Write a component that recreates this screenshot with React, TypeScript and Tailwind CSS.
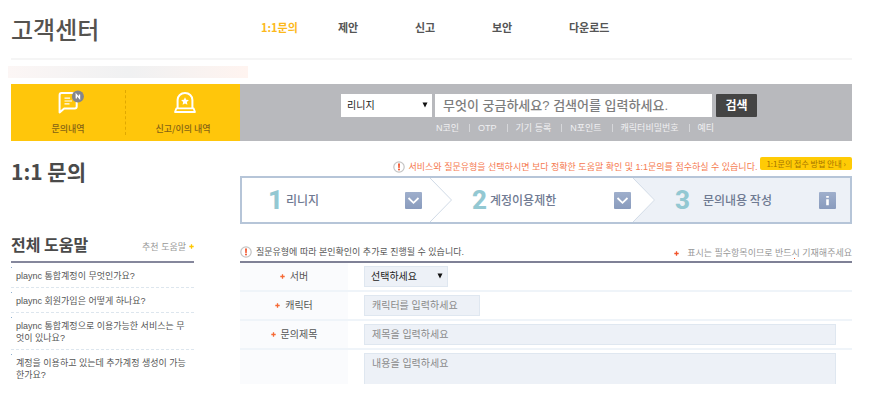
import React from "react";

const bodyFont = "font-['Liberation_Sans','Noto_Sans_CJK_KR',sans-serif]";
const titleFont = "font-['Noto_Sans_CJK_KR',sans-serif]";

const navItems = ["1:1문의", "제안", "신고", "보안", "다운로드"];
const keywords = ["N코인", "OTP", "기기 등록", "N포인트", "캐릭터비밀번호", "예티"];
const helpItems: string[][] = [
  ["plaync 통합계정이 무엇인가요?"],
  ["plaync 회원가입은 어떻게 하나요?"],
  ["plaync 통합계정으로 이용가능한 서비스는 무", "엇이 있나요?"],
  ["계정을 이용하고 있는데 추가계정 생성이 가능", "한가요?"],
];

function Alert() {
  return (
    <svg viewBox="0 0 12 12" className="size-3 shrink-0" aria-hidden="true">
      <circle cx="6" cy="6" r="5.2" fill="#fff" stroke="#c4c4c4" strokeWidth="1.2" />
      <path d="M5 2.6h2L6.7 7H5.3z" fill="#f2542c" />
      <circle cx="6" cy="8.6" r="1" fill="#f2542c" />
    </svg>
  );
}

function Arrow({ className }: { className: string }) {
  return (
    <svg viewBox="0 0 6 6" className={`pointer-events-none absolute size-[6px] ${className}`} aria-hidden="true">
      <path d="M0.5 0.5h5L3 5.5z" fill="#111" />
    </svg>
  );
}

function Plus({ className }: { className: string }) {
  return (
    <svg viewBox="0 0 5 5" className={`size-[5px] shrink-0 ${className}`} aria-hidden="true">
      <path d="M2.5 0.3v4.4M0.3 2.5h4.4" stroke="currentColor" strokeWidth="1.3" />
    </svg>
  );
}

function InquiryIcon() {
  return (
    <svg viewBox="0 0 28 24" className="ml-1 h-6 w-7" fill="none" aria-hidden="true">
      <path
        d="M5.5 3h13.2c1.3 0 2 .8 2 2v11.4c0 1.3-.8 2-2 2H8.2L3.6 22.4V5.2c0-1.3.8-2.2 1.9-2.2z"
        stroke="#fff"
        strokeWidth="2"
        strokeLinejoin="round"
      />
      <path d="M8.5 8.2h5.5M8.5 11h7.5M8.5 13.8h5" stroke="#fff" strokeWidth="1.2" />
      <circle cx="21.9" cy="6.4" r="6" fill="#84868d" />
      <path d="M20.3 8.6V4.6l3.2 3.6V4.6" stroke="#fff" strokeWidth="1.4" />
    </svg>
  );
}

function SirenIcon() {
  return (
    <svg viewBox="0 0 24 24" className="ml-1 size-6" fill="none" aria-hidden="true">
      <path
        d="M4.6 18V10C4.6 5.9 7.8 3 12 3s7.4 2.9 7.4 7v8"
        stroke="#fff"
        strokeWidth="2"
      />
      <path d="M3.4 18.4h17.2l1.4 3.6H2z" stroke="#fff" strokeWidth="1.8" strokeLinejoin="round" />
      <path d="M12 7.2l1.2 2.5 2.7.4-2 1.9.5 2.7-2.4-1.3-2.4 1.3.5-2.7-2-1.9 2.7-.4z" fill="#fff" />
    </svg>
  );
}

function Divider({ fill }: { fill: string }) {
  return (
    <svg viewBox="0 0 22 44" preserveAspectRatio="none" className="h-full w-[22px] shrink-0" aria-hidden="true">
      <path d="M0 0h22v44H0L22 22z" fill={fill} />
      <path d="M0 0L21.5 22L0 44" fill="none" stroke="#d0dae6" />
    </svg>
  );
}

function StepButton({ kind, label }: { kind: "open" | "info"; label: string }) {
  return (
    <button type="button" aria-label={label} className="size-[17px] shrink-0 rounded-[1px] bg-linear-to-b from-[#9fafcc] to-[#899bbd]">
      <svg viewBox="0 0 17 17" className="size-full" fill="none" aria-hidden="true">
        {kind === "open" ? (
          <path d="M3.5 6l5 4.8 5-4.8" stroke="#fff" strokeWidth="1.8" />
        ) : (
          <path d="M7.2 4h2.6v1.8H7.2zM7.2 7.2h2.6v6H7.2z" fill="#fff" />
        )}
      </svg>
    </button>
  );
}

function StepText({ no, children }: { no: string; children: React.ReactNode }) {
  return (
    <>
      <span className="w-[14px] shrink-0 font-['Roboto',sans-serif] text-[26px] leading-none font-extrabold text-[#93c8d2]">{no}</span>
      <span className={`${no === "3" ? "ml-[14px]" : "ml-1"} flex-1 text-xs font-medium whitespace-nowrap text-[#6f7a92]`}>{children}</span>
    </>
  );
}

function Row({ id, label, children }: { id?: string; label?: string; children: React.ReactNode }) {
  return (
    <div className={`flex ${label ? "border-b-2 border-[#eff4f9]" : "h-[34px] overflow-hidden"}`}>
      <div className="flex w-[108px] shrink-0 items-center justify-center gap-[5px] bg-[#fafbfd] pb-px text-[10px] text-[#555]">
        {label && <Plus className="text-[#f56a35]" />}
        {label && <label htmlFor={id}>{label}</label>}
      </div>
      <div className="min-w-0 flex-1 px-4 pt-[3px] pb-[3px]">{children}</div>
    </div>
  );
}

const field =
  "block h-[21px] rounded-none border border-[#dfe7f0] bg-[#edf1f7] px-[7px] text-[10px] text-[#555] placeholder:text-[#8a8a8a] outline-none";

export default function App() {
  return (
    <div className={`bg-white pr-[19px] pl-[11px] ${bodyFont}`}>
      <header className={`flex h-[60px] items-center border-b-2 border-[#f5f5f5] ${titleFont}`}>
        <h1 className="w-[229px] text-2xl leading-none font-medium text-[#55534f]">고객센터</h1>
        <nav className="flex pb-1 pl-[21px]">
          {navItems.map((item, i) => (
            <a key={item} href="#" className={`w-[77px] text-[11px] leading-4 font-bold whitespace-nowrap ${i === 0 ? "text-[#fcb91c]" : "text-[#555]"}`}>
              {item}
            </a>
          ))}
        </nav>
      </header>

      <div className="-ml-[3px] mt-[6px] h-3 w-60 bg-linear-to-r from-[#fcf6f5] via-[#f0f1f2] to-[#fff4f0]" />

      <section className="mt-[6px] flex h-[57px] bg-[#b8b9bd]">
        <div className={`flex w-[229px] shrink-0 bg-[#ffc60b] text-[9px] leading-3 font-medium text-[#856315] ${titleFont}`}>
          <a href="#" className="my-1.5 flex flex-1 flex-col items-center justify-between border-r border-dashed border-[#e0a800]">
            <InquiryIcon />
            문의내역
          </a>
          <a href="#" className="my-1.5 flex flex-1 flex-col items-center justify-between">
            <SirenIcon />
            신고/이의 내역
          </a>
        </div>
        <form className="min-w-0 flex-1 pt-[10px] pl-[101px]" onSubmit={(e) => e.preventDefault()}>
          <div className="flex h-[23px]">
            <div className="relative">
              <select aria-label="게임 선택" className="block h-[23px] w-[91px] appearance-none rounded-none bg-white pl-[6px] text-[10px] text-[#222]">
                <option>리니지</option>
              </select>
              <Arrow className="top-2 right-1" />
            </div>
            <input
              aria-label="검색어"
              placeholder="무엇이 궁금하세요? 검색어를 입력하세요."
              className="ml-[3px] w-[277px] bg-white px-2 text-[13px] font-medium outline-none placeholder:text-[#7d7d7d]"
            />
            <button type="submit" className="ml-1 w-[41px] rounded-[1px] bg-[#444] text-xs font-bold text-white">검색</button>
          </div>
          <ul className="mt-[5px] flex pl-[95px] text-[9px] leading-3 whitespace-nowrap text-[#f0f0f2]">
            {keywords.map((word, i) => (
              <li key={word} className="flex items-center">
                {i > 0 && <span className="mr-2 ml-[10px] h-2 w-px bg-[#d6d7da]" />}
                <a href="#">{word}</a>
              </li>
            ))}
          </ul>
        </form>
      </section>

      <div className="flex">
        <aside className="w-[229px] shrink-0 pr-[46px]">
          <h2 className={`mt-[18px] text-[21px] leading-6 font-bold text-[#4a4a4a] ${titleFont}`}>1:1 문의</h2>
          <div className="mt-[48px] flex h-8 items-center justify-between border-b-2 border-[#85879c] pb-[5px]">
            <h3 className={`text-base leading-5 font-bold text-[#4a4a4a] ${titleFont}`}>전체 도움말</h3>
            <a href="#" className="flex items-center gap-[3px] pt-1.5 text-[9px] leading-3 text-[#999]">
              추천 도움말
              <Plus className="text-[#ffc800]" />
            </a>
          </div>
          <ul className="text-[9px] leading-3 whitespace-nowrap text-[#555]">
            {helpItems.map((lines, i) => (
              <li key={lines[0]} className={`relative pt-[7px] pb-[5px] pl-[5px] ${i < 3 ? "border-b border-dashed border-[#dde6ee]" : ""}`}>
                <span className="absolute top-1 left-0 size-px bg-[#8fb0d0]" />
                <a href="#">
                  {lines.map((line) => (
                    <span key={line} className="block">{line}</span>
                  ))}
                </a>
              </li>
            ))}
          </ul>
        </aside>

        <main className="min-w-0 flex-1">
          <div className="mt-4 flex h-[19px] items-start justify-end whitespace-nowrap">
            <p className="mt-1 flex items-center gap-1 text-[9px] leading-3 text-[#f57a50]">
              <Alert />
              서비스와 질문유형을 선택하시면 보다 정확한 도움말 확인 및 1:1문의를 접수하실 수 있습니다.
            </p>
            <a href="#" className={`ml-[3px] flex h-[13px] items-center rounded-[2px] bg-[#ffcb05] px-1.5 text-[8px] leading-3 text-[#a57300] ${titleFont}`}>
              1:1문의 접수 방법 안내 ›
            </a>
          </div>

          <ol className={`grid h-12 grid-cols-[210fr_203fr_195fr] border-2 border-[#b6c5d8] ${titleFont}`}>
            <li className="flex items-center pl-[26px]">
              <StepText no="1">리니지</StepText>
              <StepButton kind="open" label="게임 변경" />
              <span className="w-2" />
              <Divider fill="#fff" />
            </li>
            <li className="flex items-center pl-5">
              <StepText no="2">계정이용제한</StepText>
              <StepButton kind="open" label="유형 변경" />
              <span className="w-0.5" />
              <Divider fill="#edf1f7" />
            </li>
            <li className="flex items-center bg-[#edf1f7] pr-[14px] pl-5">
              <StepText no="3">문의내용 작성</StepText>
              <StepButton kind="info" label="작성 안내" />
            </li>
          </ol>

          <div className="mt-[21px] flex justify-between text-[9px] leading-3 whitespace-nowrap">
            <p className="flex items-center gap-1 text-[#555]">
              <Alert />
              질문유형에 따라 본인확인이 추가로 진행될 수 있습니다.
            </p>
            <p className="relative flex items-center gap-2 pt-0.5 text-[#999]">
              <Plus className="text-[#f2542c]" />
              표시는 필수항목이므로 반드시 기재해주세요
              <span className="absolute right-[57px] bottom-0 size-px bg-[#f2643c]" />
            </p>
          </div>

          <form className="mt-[2px] border-t-2 border-[#7f8196]" onSubmit={(e) => e.preventDefault()}>
            <Row id="server" label="서버">
              <div className="relative w-[84px]">
                <select id="server" className="block h-[21px] w-full appearance-none rounded-none border border-[#dfe7f0] bg-[#edf1f7] pl-1.5 text-[10px] text-[#222]">
                  <option>선택하세요</option>
                </select>
                <Arrow className="top-[7px] right-[5px]" />
              </div>
            </Row>
            <Row id="character" label="캐릭터">
              <input id="character" placeholder="캐릭터를 입력하세요" className={`${field} w-[116px]`} />
            </Row>
            <Row id="title" label="문의제목">
              <input id="title" placeholder="제목을 입력하세요" className={`${field} w-full`} />
            </Row>
            <Row>
              <textarea
                aria-label="문의내용"
                placeholder="내용을 입력하세요"
                className="block h-20 w-full resize-none border border-[#dfe7f0] bg-[#edf1f7] px-[7px] py-[3px] text-[10px] leading-[14px] text-[#555] outline-none placeholder:text-[#8a8a8a]"
              />
            </Row>
          </form>
        </main>
      </div>
    </div>
  );
}
